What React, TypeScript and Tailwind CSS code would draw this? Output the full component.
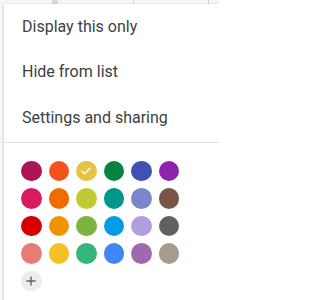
import React from 'react';

// Google Calendar palette, row by row
const colors = [
  ['#AD1457', '#F4511E', '#E4C441', '#0B8043', '#3F51B5', '#8E24AA'],
  ['#D81B60', '#EF6C00', '#C0CA33', '#009688', '#7986CB', '#795548'],
  ['#D50000', '#F09300', '#7CB342', '#039BE5', '#B39DDB', '#616161'],
  ['#E67C73', '#F6BF26', '#33B679', '#4285F4', '#9E69AF', '#A79B8E'],
];

const items = ['Display this only', 'Hide from list', 'Settings and sharing'];

function Swatch({ color, selected }: { color: string; selected?: boolean }) {
  return (
    <div
      className="w-[20.5px] h-[20.5px] rounded-full flex items-center justify-center"
      style={{ backgroundColor: color }}
    >
      {selected && (
        <svg width="12" height="12" viewBox="0 0 24 24" fill="none">
          <path d="M4 12.5l5 5L20 6.5" stroke="white" strokeWidth="3" strokeLinecap="round" strokeLinejoin="round" />
        </svg>
      )}
    </div>
  );
}

export default function App() {
  return (
    <div className="relative w-[219px] h-[300px] overflow-hidden bg-[#f6f6f6] font-['Roboto',sans-serif]">
      {/* calendar grid peeking out behind the menu */}
      <div className="flex h-[4px]">
        <div className="w-[52px]" />
        <div className="w-[6px] bg-[#d9d9d9]" />
        <div className="w-[75px]" />
        <div className="w-px bg-[#e0e0e0]" />
        <div className="w-[74px]" />
        <div className="w-px bg-[#d0d0d0]" />
      </div>

      {/* popup menu */}
      <div className="absolute left-[4px] top-[4px] w-[240px] h-[310px] bg-white shadow-[0_1px_3px_rgba(0,0,0,0.25)]">
        <ul>
          {items.map((label) => (
            <li
              key={label}
              className="h-[45.5px] flex items-center pl-[18px] text-[16px] text-[#3c4043]"
            >
              {label}
            </li>
          ))}
        </ul>
        <div className="mt-[1px] border-t border-[#e0e0e0]" />

        <div className="pl-[17px] pt-[18px] flex flex-col gap-[7px]">
          {colors.map((row, i) => (
            <div key={i} className="flex gap-[7px]">
              {row.map((c) => (
                <Swatch key={c} color={c} selected={c === '#E4C441'} />
              ))}
            </div>
          ))}
          <div className="w-[20.5px] h-[20.5px] rounded-full bg-[#ececec] flex items-center justify-center">
            <svg width="12" height="12" viewBox="0 0 12 12">
              <path d="M6 1.5v9M1.5 6h9" stroke="#5f6368" strokeWidth="1.4" />
            </svg>
          </div>
        </div>
      </div>
    </div>
  );
}
